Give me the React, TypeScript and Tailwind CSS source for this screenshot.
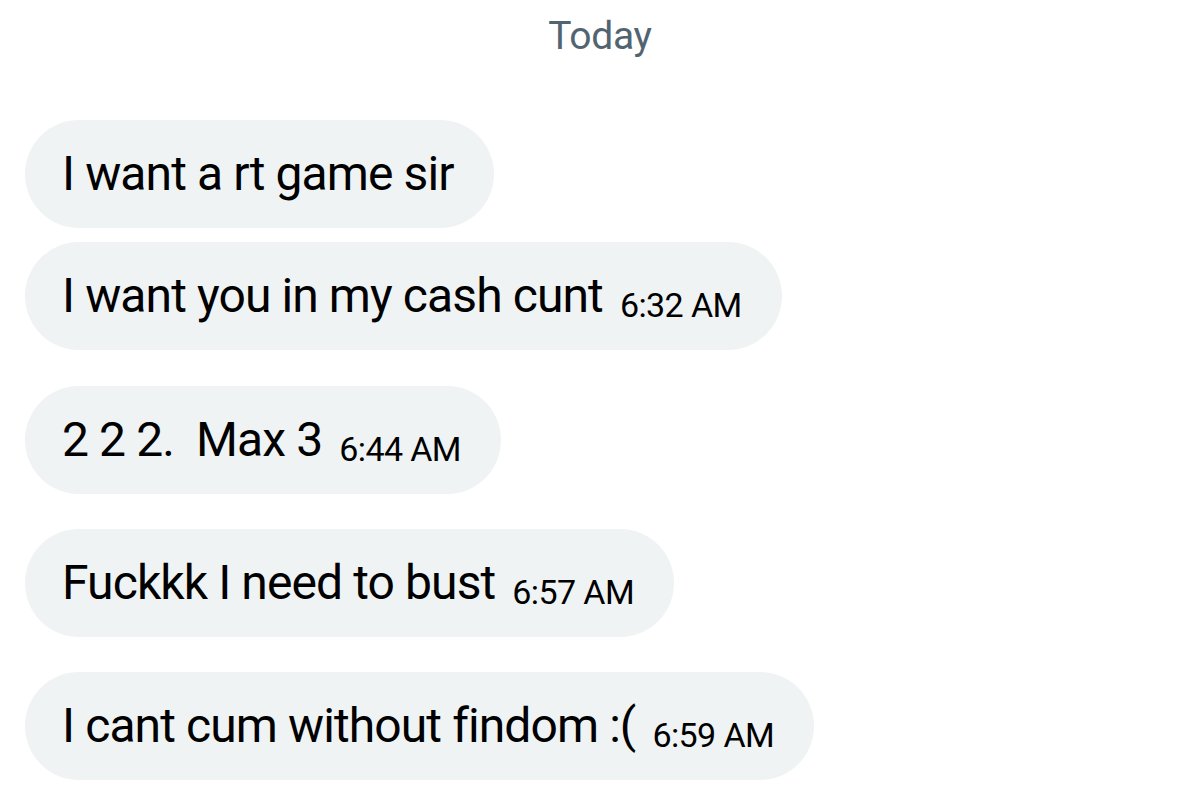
import React from "react";

interface Message {
  id: number;
  text: string;
  time?: string;
  gap: string;
}

const messages: Message[] = [
  { id: 1, text: "I want a rt game sir", gap: "mt-0" },
  { id: 2, text: "I want you in my cash cunt", time: "6:32 AM", gap: "mt-[14px]" },
  { id: 3, text: "2 2 2.  Max 3", time: "6:44 AM", gap: "mt-[36px]" },
  { id: 4, text: "Fuckkk I need to bust", time: "6:57 AM", gap: "mt-[35px]" },
  { id: 5, text: "I cant cum without findom :(", time: "6:59 AM", gap: "mt-[35px]" },
];

const App: React.FC = () => {
  return (
    <div
      className="w-[1200px] h-[805px] bg-white overflow-hidden"
      style={{ fontFamily: "Roboto, 'Liberation Sans', sans-serif" }}
    >
      {/* Date divider */}
      <div className="pt-[14px] text-center text-[39px] leading-[44px] text-[#536471] tracking-[-0.3px]">
        Today
      </div>

      {/* Messages */}
      <div className="mt-[62px] pl-[25px] flex flex-col items-start">
        {messages.map((m) => (
          <div
            key={m.id}
            className={`${m.gap} h-[108px] bg-[#eff3f4] rounded-full pl-[37px] pr-[40px] flex items-center text-black`}
          >
            <div className="flex items-baseline">
              <span className="text-[48px] tracking-[-0.9px] whitespace-pre leading-none">{m.text}</span>
              {m.time && (
                <span className="ml-[17px] translate-y-[5px] text-[34px] tracking-[-0.6px] leading-none whitespace-pre">
                  {m.time}
                </span>
              )}
            </div>
          </div>
        ))}
      </div>
    </div>
  );
};

export default App;
